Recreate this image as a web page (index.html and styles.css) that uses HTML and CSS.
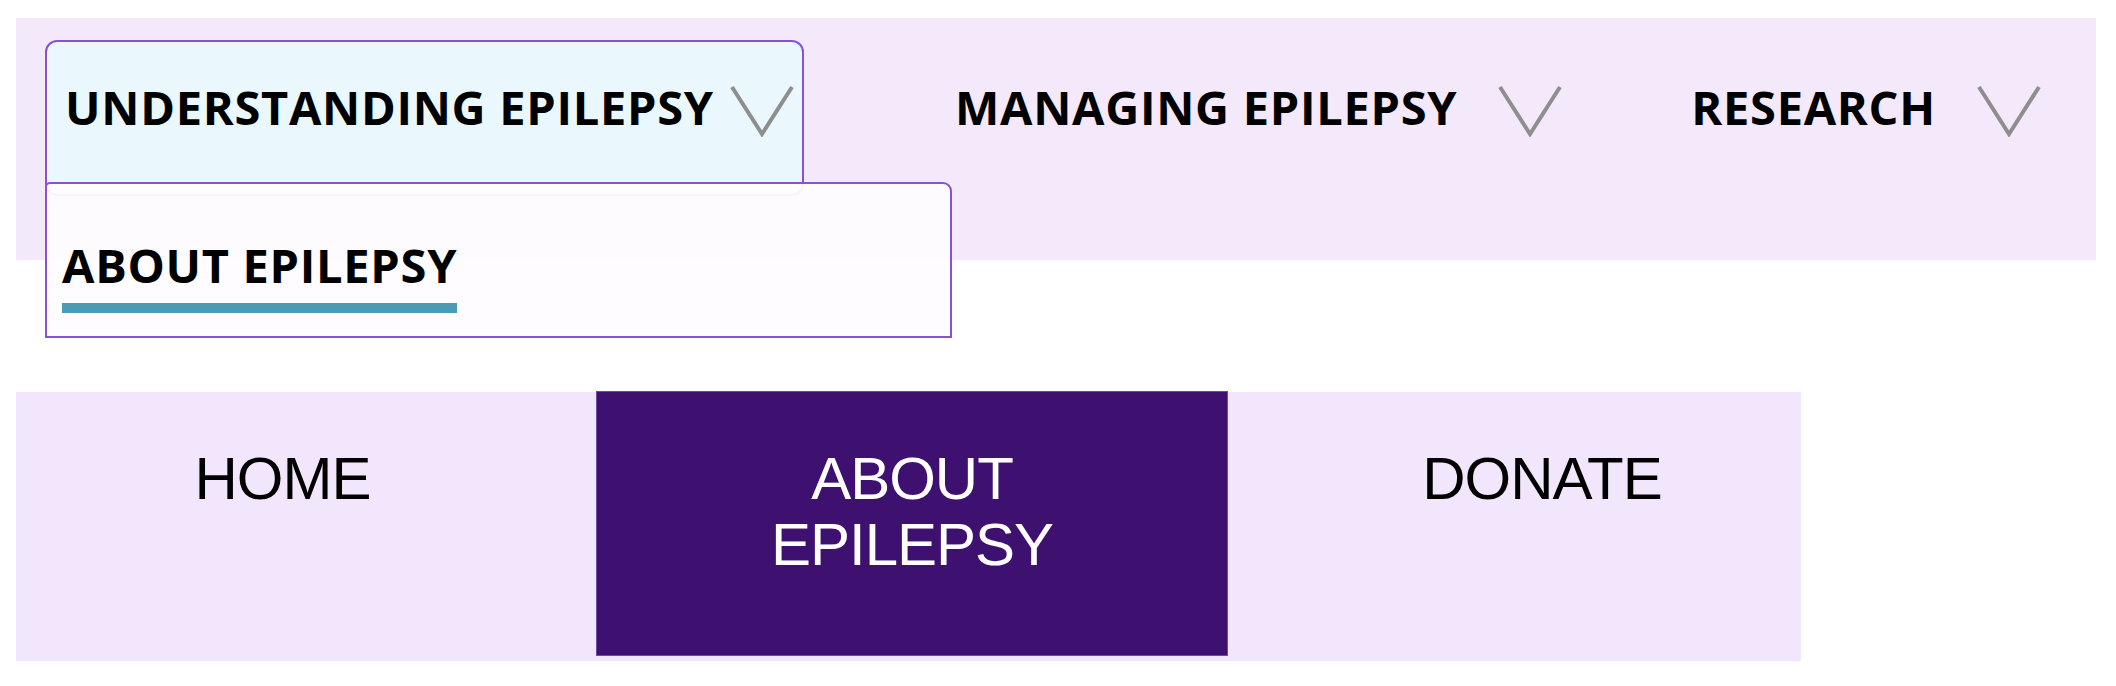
FILE: index.html
```html
<!DOCTYPE html>
<html lang="en">
<head>
<meta charset="utf-8">
<title>Epilepsy navigation</title>
<link rel="stylesheet" href="styles.css">
</head>
<body>
<nav class="topnav">
  <div class="tn-item tn-open">
    <span class="tn-label">UNDERSTANDING EPILEPSY</span>
    <svg class="chev chev-auto" viewBox="0 0 64 52" width="64" height="52" aria-hidden="true"><polyline points="2,2 32,49 62,2"/></svg>
    <div class="dropdown">
      <span class="dd-link">ABOUT EPILEPSY</span>
    </div>
  </div>
  <div class="tn-item tn-second">
    <span class="tn-label">MANAGING EPILEPSY</span>
    <svg class="chev" viewBox="0 0 64 52" width="64" height="52" aria-hidden="true"><polyline points="2,2 32,49 62,2"/></svg>
  </div>
  <div class="tn-item tn-third">
    <span class="tn-label">RESEARCH</span>
    <svg class="chev" viewBox="0 0 64 52" width="64" height="52" aria-hidden="true"><polyline points="2,2 32,49 62,2"/></svg>
  </div>
</nav>

<nav class="mainnav">
  <div class="mn-item mn-home">HOME</div>
  <div class="mn-item mn-active">ABOUT<br>EPILEPSY</div>
  <div class="mn-item mn-donate">DONATE</div>
</nav>
</body>
</html>
```

FILE: styles.css
```css
html, body {
  margin: 0;
  padding: 0;
  background: #ffffff;
}

.topnav {
  margin: 18px 0 0 16px;
  width: 2080px;
  height: 242px;
  box-sizing: border-box;
  padding: 22px 0 0 29px;
  background: #f3e9fb;
  display: flex;
  align-items: flex-start;
  font-family: "Open Sans", "Noto Sans", sans-serif;
  font-weight: 700;
  font-size: 47px;
  letter-spacing: 0.7px;
  line-height: 64px;
  color: #000000;
}

.tn-item {
  position: relative;
  display: flex;
  align-items: flex-start;
  height: 156px;
  box-sizing: border-box;
  border: 2px solid transparent;
  border-radius: 12px;
  padding: 33px 8px 0 18px;
}

.tn-open {
  width: 759px;
  border-color: #8a52d3;
  background: #eaf8fd;
}

.tn-second {
  margin-left: 131px;
}

.tn-third {
  margin-left: 99px;
}

.tn-label {
  white-space: nowrap;
}

.chev {
  flex: none;
  margin-top: 10px;
  margin-left: 41px;
}

.chev-auto {
  margin-left: auto;
}

.chev polyline {
  fill: none;
  stroke: #8e8e8e;
  stroke-width: 4;
}

.dropdown {
  position: absolute;
  left: -2px;
  top: 140px;
  width: 907px;
  height: 156px;
  box-sizing: border-box;
  border: 2px solid #8a52d3;
  border-radius: 5px 9px 0 0;
  background: rgba(254, 252, 255, 0.94);
  padding: 49px 0 0 15px;
}

.dd-link {
  display: inline-block;
  padding-bottom: 6px;
  border-bottom: 10px solid #4a9cb6;
}

.mainnav {
  margin: 132px 0 0 16px;
  width: 1785px;
  height: 269px;
  display: grid;
  grid-template-columns: 581px 630px 574px;
  align-items: start;
  background: #f1e6fc;
  font-family: "Liberation Sans", Arial, sans-serif;
  font-size: 60px;
  letter-spacing: -1px;
  line-height: 66px;
  color: #000000;
}

.mn-item {
  box-sizing: border-box;
  padding-top: 54px;
  text-align: center;
}

.mn-home {
  padding-right: 48px;
}

.mn-donate {
  padding-left: 56px;
}

.mn-active {
  height: 263px;
  background: #3e1170;
  color: #ffffff;
  box-shadow: 0 0 0 1px #6c4aa3;
}
```
